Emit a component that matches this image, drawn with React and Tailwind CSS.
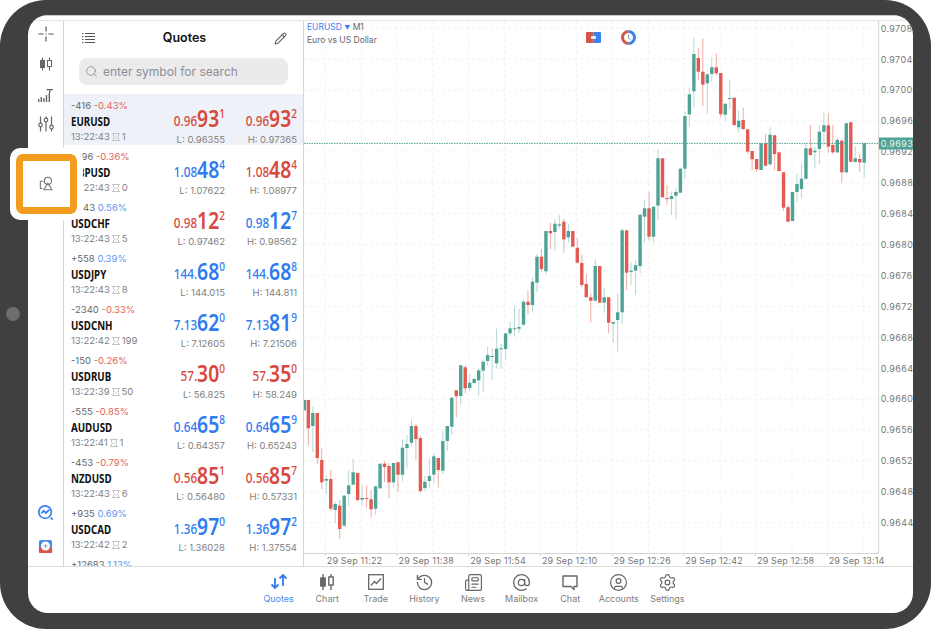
import React from "react";
import { AtSign, CircleUser, History, Newspaper, Pencil, Search, Settings } from "lucide-react";

// g/r, body top, body bottom, wick top, wick bottom (page y). First one is clipped by the axis.
const candles = [
  ["g",400,410.3,400,410.3],["r",400,428.3,400,445.7],["g",413,426,406.7,452],["r",413,458,413,464],["r",460,482.3,448.3,489],["g",479,480.7,475,494],
  ["r",479,508.7,470,510.7],["g",504,510,501.7,522.7],["r",505.7,529,500,539.3],["g",495.7,525.7,495,526.7],["g",485.3,494,470,506],["g",472.3,484.7,458.7,485.3],
  ["r",473,500,473,501.7],["g",498,499.7,485.3,506],["r",498,499,485.3,507.7],["r",499.3,509.3,490,517.3],["g",486.3,508.7,486.3,514.3],["g",463.7,488.3,463.7,488.3],
  ["r",463.7,467,461.3,482],["r",466,482.3,463.3,498.3],["g",463,482.3,463,487.3],["r",462.3,474.7,462.3,491.7],["g",447.7,474.7,439.3,481],["g",444,448,435,468.3],
  ["g",426,442.7,419.3,446],["r",426,439,424,460],["r",438,491,436,492.7],["g",481.7,488,476,490.7],["g",476,481,458.3,487.7],["g",456.3,474.7,453.3,483.3],
  ["r",458,470,458,487.7],["g",441,470.7,430.7,474],["g",426,441,426,451],["g",397.7,426.7,397.7,435],["r",390.3,396.3,390.3,417.3],["g",365.3,396,365.3,404],
  ["r",367.3,388.3,365.3,393],["g",382.7,388,374,391.3],["g",379,383,378,384],["g",370.3,380.3,368.3,396],["g",361.7,370.7,360,391.7],
  ["g",355,361,346.7,365.7],["g",356,356.7,348.3,380],["g",348.7,363.3,328.3,368.3],["g",348.3,349,344,368.3],["g",333.3,349,333.3,359.3],["g",328.3,333.3,321.7,336],
  ["g",328.3,329,306,336],["g",327,328.7,309,333.3],["g",301.7,324.7,300,326],["r",301.7,305,290.7,314.3],["g",281.7,305,277.3,312.3],["g",256.7,282.7,254,292],
  ["r",256.7,269,249,271.7],["g",231,271.3,231,274],["r",231,233.3,222.7,249],["g",223.7,232,219,251],["g",224.3,225.7,215,229],["r",221.7,239.3,219,252.7],
  ["g",231,237.3,224,242.7],["r",231,246.7,231,247.3],["r",247.7,262.7,238.3,263.3],["r",263,285,255,287.3],["r",284,297.3,274,297.7],["r",297.3,300.7,293.3,322.7],
  ["g",266,300.7,259.3,301.7],["r",266,302.7,266,303.3],["g",297.3,302.7,288.3,312.7],["r",297.3,322.7,297.3,333.3],["g",322,323.7,322,342.7],["g",312.3,320,293.3,351.7],
  ["g",230.3,312.3,228.3,324],["r",230.3,272.7,230.3,290],["g",270.7,272,262.3,285],["g",265.3,270.7,260,294.7],["g",214.7,266,214,273.3],
  ["g",208.3,216.7,200,243.3],["r",208.3,236.7,191.7,240.7],["g",206.7,236.7,206.7,242.7],["g",158.3,205.5,149.3,220],["r",158.3,197.3,158.3,197.3],["r",198,198.8,185,204.7],
  ["g",196,199,191.7,215],["g",192,195.7,188.3,219.3],["g",168.7,192.7,167.3,193],["g",116,168.7,111.7,178.3],["g",94.3,114.3,87.3,127.3],["g",54,91.3,37.3,107.3],
  ["r",58,71.7,48.3,80],["r",71.7,84.7,38.3,106],["g",74.3,83.3,73.3,114],["g",67.3,74,57.3,81.7],["r",67.3,73.3,53.3,75],["r",73,114.3,73,117.3],["g",103.7,114.7,103.7,120.7],
  ["g",98,98.7,80,109],["r",97.7,125,97.7,126],["g",120.7,127.3,110.7,132.3],["r",120,129,107.7,130],["r",129.3,151.7,129.3,154],["r",151,159.3,151,170],["r",159,169.3,159,172],
  ["g",143.3,170,143.3,170],["r",143.3,165.7,134,166.7],["g",134.7,164.3,127.3,166],["r",135.3,154,135.3,170],["r",152.3,171,151.7,171.7],["r",172.3,207.7,172.3,210.7],
  ["r",207.3,221.7,205,222],["g",192,221,192,221],["g",184,192,173.3,201.7],["g",178.7,189,163.3,198.3],["g",148.3,178.7,142.7,180],["r",148.3,155,125,155.3],["g",150.7,152.3,146.7,168.3],
  ["g",131.7,149,125,164],["g",125.3,131.7,112.7,145],["r",125.3,146.7,113.3,152.7],["r",145,152.3,125,154],["g",140,152.3,137.3,153.3],["r",140.7,172.3,139.3,183.3],
  ["g",123.3,172.3,122.7,173.3],["r",122.3,161.7,122.3,162.7],["g",158.3,162,146,162.7],["r",159,162.3,154,172.3],["g",143.3,162.7,143.3,177.3],
];

const priceLabels = ["0.97080","0.97040","0.97000","0.96960","0.96920","0.96880","0.96840","0.96800","0.96760","0.96720","0.96680","0.96640","0.96600","0.96560","0.96520","0.96480","0.96440"];
const timeLabels = ["29 Sep 11:22","29 Sep 11:38","29 Sep 11:54","29 Sep 12:10","29 Sep 12:26","29 Sep 12:42","29 Sep 12:58","29 Sep 13:14"];

const quotes = [
  { symbol: "EURUSD", change: "-416", pct: "-0.43%", time: "13:22:43", spread: "1", low: "0.96355", high: "0.97365", bid: ["0.96", "93", "1", "r"], ask: ["0.96", "93", "2", "r"], active: true },
  { symbol: "GBPUSD", change: "-496", pct: "-0.36%", time: "13:22:43", spread: "0", low: "1.07622", high: "1.08977", bid: ["1.08", "48", "4", "b"], ask: ["1.08", "48", "4", "r"] },
  { symbol: "USDCHF", change: "+543", pct: "0.56%", time: "13:22:43", spread: "5", low: "0.97462", high: "0.98562", bid: ["0.98", "12", "2", "r"], ask: ["0.98", "12", "7", "b"] },
  { symbol: "USDJPY", change: "+558", pct: "0.39%", time: "13:22:43", spread: "8", low: "144.015", high: "144.811", bid: ["144.", "68", "0", "b"], ask: ["144.", "68", "8", "b"] },
  { symbol: "USDCNH", change: "-2340", pct: "-0.33%", time: "13:22:42", spread: "199", low: "7.12605", high: "7.21506", bid: ["7.13", "62", "0", "b"], ask: ["7.13", "81", "9", "b"] },
  { symbol: "USDRUB", change: "-150", pct: "-0.26%", time: "13:22:39", spread: "50", low: "56.825", high: "58.249", bid: ["57.", "30", "0", "r"], ask: ["57.", "35", "0", "r"] },
  { symbol: "AUDUSD", change: "-555", pct: "-0.85%", time: "13:22:41", spread: "1", low: "0.64357", high: "0.65243", bid: ["0.64", "65", "8", "b"], ask: ["0.64", "65", "9", "b"] },
  { symbol: "NZDUSD", change: "-453", pct: "-0.79%", time: "13:22:43", spread: "6", low: "0.56480", high: "0.57331", bid: ["0.56", "85", "1", "r"], ask: ["0.56", "85", "7", "r"] },
  { symbol: "USDCAD", change: "+935", pct: "0.69%", time: "13:22:42", spread: "2", low: "1.36028", high: "1.37554", bid: ["1.36", "97", "0", "b"], ask: ["1.36", "97", "2", "b"] },
];

const SpreadIcon = () => (
  <svg width="8" height="8" viewBox="0 0 8 8" className="mx-[2px]" fill="none" stroke="#c4c4c4" strokeWidth="1">
    <path d="M0 0.5H8M0 7.5H8M1.5 0.5V3.5M6.5 0.5V3.5M1.5 7.5V5M6.5 7.5V5M1.5 3.5C3 3.5 3 5 4 5C5 5 5 3.5 6.5 3.5" />
  </svg>
);

const Price = ({ parts }) => {
  const [head, big, tail, tone] = parts;
  const color = tone === "r" ? "text-[#d8483c]" : "text-[#2f7bf0]";
  return (
    <div className={`flex origin-right scale-x-[0.84] items-start justify-end font-['Noto_Sans',sans-serif] font-semibold ${color}`}>
      <span className="mt-[8px] text-[14px] leading-[16px] font-medium">{head}</span>
      <span className="text-[23px] leading-[27px]">{big}</span>
      <span className="mt-[2px] text-[12px] leading-[14px] font-medium">{tail}</span>
    </div>
  );
};

const QuoteRow = ({ q }) => {
  const up = !q.pct.startsWith("-");
  return (
    <div className={`flex h-[51px] shrink-0 pl-[7px] pr-[6px] ${q.active ? "bg-[#eef2f8]" : ""}`}>
      <div className="flex-1 pt-[5px]">
        <div className="text-[9.5px] leading-[13px] text-[#666] whitespace-nowrap">
          {q.change} <span className={up ? "text-[#5b96f3]" : "text-[#e3635a]"}>{q.pct}</span>
        </div>
        <div className="mt-[1px] origin-left scale-x-[0.75] font-['Noto_Sans',sans-serif] text-[13px] leading-[16px] font-bold text-[#111]">{q.symbol}</div>
        <div className="mt-[1px] flex items-center text-[9.5px] leading-[13px] text-[#808080]">
          {q.time}<SpreadIcon />{q.spread}
        </div>
      </div>
      <div className="w-[72px] pt-[11px] text-right">
        <Price parts={q.bid} />
        <div className="mt-[1px] text-[9.5px] leading-[13px] text-[#808080]">L: {q.low}</div>
      </div>
      <div className="w-[72px] pt-[11px] text-right">
        <Price parts={q.ask} />
        <div className="mt-[1px] text-[9.5px] leading-[13px] text-[#808080]">H: {q.high}</div>
      </div>
    </div>
  );
};

const Chart = () => (
  <svg viewBox="304 21 609 545" className="block h-full w-full" fontFamily="Inter, sans-serif">
    {priceLabels.map((_, k) => (
      <line key={k} x1="304" x2="879" y1={28.3 + 30.9 * k} y2={28.3 + 30.9 * k} stroke="#f0f1f3" strokeDasharray="3 3" />
    ))}
    {Array.from({ length: 16 }, (_, j) => 325.3 + 35.9 * j).map((x) => (
      <line key={x} x1={x} x2={x} y1="21" y2="553" stroke="#f0f1f3" strokeDasharray="3 3" />
    ))}
    {candles.map(([tone, top, bottom, wickTop, wickBottom], i) => {
      const x = 308.33 + 4.483 * (i - 1);
      const red = tone === "r";
      return (
        <g key={i}>
          <line x1={x} x2={x} y1={wickTop} y2={wickBottom} stroke={red ? "#f0aaa5" : "#b4d9d2"} strokeWidth="1" />
          <rect x={Math.max(x - 1.7, 304)} y={top} width={x - 1.7 < 304 ? 2 : 3.4} height={Math.max(bottom - top, 1)} fill={red ? "#e25a52" : "#4fa395"} />
        </g>
      );
    })}
    <line x1="304" x2="879" y1="143.4" y2="143.4" stroke="#4fa395" strokeDasharray="1.5 1" />
    <line x1="878.6" x2="878.6" y1="21" y2="553.5" stroke="#d4d4d4" />
    <line x1="304" x2="878.6" y1="553.5" y2="553.5" stroke="#d4d4d4" />
    {priceLabels.map((label, k) => (
      <text key={label} x="880.7" y={31.6 + 30.9 * k} fontSize="9" letterSpacing="0.35" fill="#777">{label}</text>
    ))}
    <rect x="879" y="137.5" width="34" height="12" fill="#4fa395" />
    <text x="880.7" y="146.8" fontSize="9" letterSpacing="0.35" fill="#e8f4f1">0.96931</text>
    {timeLabels.map((label, i) => {
      const tick = 325.3 + 71.7 * i;
      return (
        <g key={label}>
          <line x1={tick} x2={tick} y1="553" y2="556" stroke="#d4d4d4" />
          <text x={tick + 1.5} y="563.5" fontSize="9" letterSpacing="0.15" fill="#777">{label}</text>
        </g>
      );
    })}
  </svg>
);

const tabs = [
  { label: "Quotes", active: true, icon: (
    <svg width="20" height="20" viewBox="0 0 20 20" fill="none" stroke="#2f7bf0" strokeWidth="1.8"><path d="M6 6V16M2.5 12.5L6 16L9.5 12.5M14 14V3M10.5 6.5L14 3L17.5 6.5" /></svg>
  ) },
  { label: "Chart", icon: (
    <svg width="20" height="20" viewBox="0 0 20 20" fill="none" stroke="#666" strokeWidth="1.4"><path d="M6 2V18M14 2V18" /><rect x="3.8" y="6" width="4.4" height="8" fill="#666" /><rect x="11.8" y="5" width="4.4" height="8" fill="#fff" /></svg>
  ) },
  { label: "Trade", icon: (
    <svg width="20" height="20" viewBox="0 0 20 20" fill="none" stroke="#666" strokeWidth="1.3"><rect x="2.7" y="2.7" width="14.6" height="14.6" /><path d="M5 13.5L8.5 9.5L10.5 11.5L15 6.5" /></svg>
  ) },
  { label: "History", icon: <History size={19} strokeWidth={1.6} color="#666" /> },
  { label: "News", icon: <Newspaper size={19} strokeWidth={1.5} color="#666" /> },
  { label: "Mailbox", icon: <AtSign size={19} strokeWidth={1.6} color="#666" /> },
  { label: "Chat", icon: (
    <svg width="20" height="20" viewBox="0 0 20 20" fill="none" stroke="#666" strokeWidth="1.4"><path d="M3 4H17V14.5H14V17.5L11 14.5H3Z" strokeLinejoin="round" /></svg>
  ) },
  { label: "Accounts", icon: <CircleUser size={19} strokeWidth={1.5} color="#666" /> },
  { label: "Settings", icon: <Settings size={19} strokeWidth={1.5} color="#666" /> },
];

const Sidebar = () => (
  <div className="flex w-[36px] shrink-0 flex-col items-center border-r border-[#d6d6d6]">
    <div className="flex h-[26px] items-center justify-center">
      <svg width="16" height="16" viewBox="0 0 16 16" fill="none" stroke="#555" strokeWidth="1.2"><path d="M0.5 8H5.5M10.5 8H15.5M8 0.5V5.5M8 10.5V15.5M8 7.5V8.5" /></svg>
    </div>
    <div className="flex h-[34px] items-center justify-center">
      <svg width="14" height="14" viewBox="0 0 14 14" fill="none" stroke="#666" strokeWidth="1.1"><path d="M3.5 0.5V13.5M10.5 0.5V13.5" /><rect x="1.5" y="3.5" width="4" height="7" fill="#666" /><rect x="8.5" y="3.5" width="4" height="6" fill="#fff" /></svg>
    </div>
    <div className="flex h-[28px] items-center justify-center">
      <svg width="15" height="13" viewBox="0 0 15 13" fill="#666" stroke="none"><path d="M0 10h1.4v3H0zM2.6 8h1.4v5H2.6zM5.2 9h1.4v4H5.2zM7.8 6h1.4v7H7.8zM10.6 4h1.4v9H10.6z" /><path d="M8.5 0H15V1.2H12.4V4H11V1.2H8.5z" /></svg>
    </div>
    <div className="flex h-[30px] items-center justify-center">
      <svg width="16" height="16" viewBox="0 0 16 16" fill="none" stroke="#666" strokeWidth="1.2"><path d="M2.5 0.5V7M2.5 11V15.5M8 0.5V2M8 6V15.5M13.5 0.5V9M13.5 13V15.5" /><circle cx="2.5" cy="9" r="1.8" /><circle cx="8" cy="4" r="1.8" /><circle cx="13.5" cy="11" r="1.8" /></svg>
    </div>
    <div className="mt-auto flex h-[34px] items-center justify-center">
      <svg width="17" height="17" viewBox="0 0 20 20" fill="none" stroke="#3b82f0" strokeWidth="2"><circle cx="9.5" cy="9.5" r="7.4" /><path d="M16 16L18.5 18.5M5 11L8 8L10.5 10.5L14.5 6.5" /></svg>
    </div>
    <div className="mb-[3px] flex h-[34px] items-center justify-center">
      <svg width="15" height="15" viewBox="0 0 16 16"><rect x="1" y="1" width="14" height="14" rx="2" fill="#4a8bf0" /><path d="M1 9H15V13a2 2 0 0 1-2 2H3a2 2 0 0 1-2-2Z" fill="#d8534a" /><circle cx="8" cy="7.5" r="4.8" fill="#fff" /><path d="M8 5.2V9.8M5.7 7.5H10.3" stroke="#9aa4b2" strokeWidth="1" /></svg>
    </div>
  </div>
);

export default function App() {
  return (
    <div className="relative h-[629px] w-[931px] overflow-hidden bg-white font-['Inter',sans-serif]">
      <div className="h-full rounded-[46px] bg-[#404040] pt-[15px] pb-[16px] pl-[28px] pr-[18px]">
        <div className="flex h-full flex-col overflow-hidden rounded-[20px] bg-white">
          <div className="h-[5px] shrink-0 border-t border-[#c8c8c8]" />
          <div className="flex h-[546px] shrink-0 border-t border-[#e4e4e4]">
            <Sidebar />
            <div className="flex w-[240px] shrink-0 flex-col border-r border-[#d6d6d6]">
              <div className="flex h-[37px] shrink-0 items-center justify-between pb-[2px] pl-[18px] pr-[16px]">
                <svg width="13" height="13" viewBox="0 0 13 13" fill="none" stroke="#555" strokeWidth="1"><path d="M3 1.5H13M3 4.5H13M3 7.5H13M3 10.5H13" /><path d="M0 1.5H1.5M0 4.5H1.5M0 7.5H1.5M0 10.5H1.5" /></svg>
                <span className="text-[12.5px] font-semibold text-[#111]">Quotes</span>
                <Pencil size={13} strokeWidth={2} color="#5c5c5c" />
              </div>
              <div className="mx-[15px] flex h-[27px] shrink-0 items-center gap-[5px] rounded-[8px] bg-[#ebebec] pl-[6px]">
                <Search size={13} strokeWidth={1.5} color="#8e8e93" />
                <span className="text-[12px] text-[#8e8e93]">enter symbol for search</span>
              </div>
              <div className="mt-[9px] flex-1 overflow-hidden">
                {quotes.map((q) => <QuoteRow key={q.symbol} q={q} />)}
                <div className="pl-[7px] pt-[5px] text-[9.5px] leading-[13px] text-[#666]">+12683 <span className="text-[#5b96f3]">1.13%</span></div>
              </div>
            </div>
            <div className="relative flex-1">
              <Chart />
              <div className="absolute left-[3px] top-[0px] text-[8.5px] leading-[12px] text-[#666]">
                <div><span className="text-[#3b82f0]">EURUSD</span> <span className="text-[6px] text-[#3b82f0]">▼</span> M1</div>
                <div>Euro vs US Dollar</div>
              </div>
              <div className="absolute left-[282px] top-[11px]">
                <svg width="15" height="11" viewBox="0 0 15 11"><path d="M1 0H7.5V11H1a1 1 0 0 1-1-1V1a1 1 0 0 1 1-1Z" fill="#d2574b" /><path d="M7.5 0H14a1 1 0 0 1 1 1V10a1 1 0 0 1-1 1H7.5Z" fill="#3b82f0" /><rect x="5" y="4" width="5" height="3" rx="1" fill="#f2f2f2" /></svg>
              </div>
              <div className="absolute left-[317px] top-[9px]">
                <svg width="15" height="15" viewBox="0 0 15 15" fill="none"><path d="M7.5 1.5A6 6 0 0 0 7.5 13.5" stroke="#d2574b" strokeWidth="3" /><path d="M7.5 1.5A6 6 0 0 1 7.5 13.5" stroke="#3b82f0" strokeWidth="3" /><path d="M7.5 4.5V8L9.5 9.5" stroke="#8b95a3" strokeWidth="1" /></svg>
              </div>
            </div>
          </div>
          <div className="flex h-[46px] shrink-0 justify-center border-t border-[#dcdcdc] pl-[5px]">
            {tabs.map((tab) => (
              <div key={tab.label} className="flex w-[48.6px] flex-col items-center pt-[5px]">
                <div className="flex h-[20px] items-center">{tab.icon}</div>
                <span className={`mt-[1px] text-[9px] leading-[12px] ${tab.active ? "text-[#4a8bf5]" : "text-[#7d7d7d]"}`}>{tab.label}</span>
              </div>
            ))}
          </div>
        </div>
      </div>
      <div className="absolute left-[6px] top-[307px] size-[14px] rounded-full bg-[#6e6e6e]" />
      <div className="absolute left-[10px] top-[148px] rounded-[10px] bg-white p-[6px]">
        <div className="flex h-[60px] w-[61px] items-center justify-center rounded-[7px] border-[7px] border-[#f39c1f] bg-white">
          <svg width="16" height="16" viewBox="0 0 18 18" fill="none" stroke="#777" strokeWidth="1.2"><path d="M5 6H1.5V14H4" /><circle cx="10" cy="5.5" r="4" /><path d="M10 8L5.5 15.5H14.5Z" /></svg>
        </div>
      </div>
    </div>
  );
}
